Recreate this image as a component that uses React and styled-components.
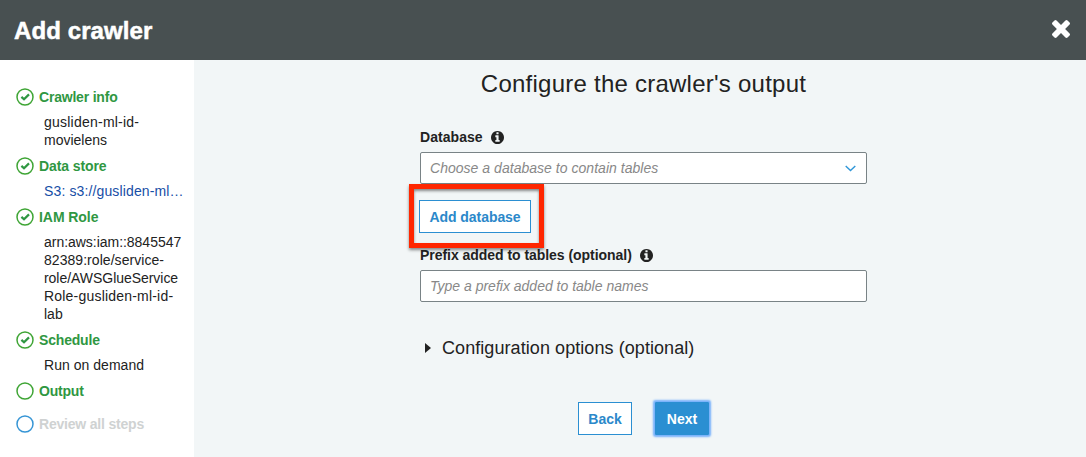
import React from "react";
import styled, { createGlobalStyle } from "styled-components";

const GlobalStyle = createGlobalStyle`
  * { box-sizing: border-box; }
  body {
    margin: 0;
    background: #f2f6f7;
    color: #222;
    font: 14px/18px "Liberation Sans", Arial, sans-serif;
  }
`;

const Page = styled.div`
  display: flex;
  flex-direction: column;
  height: 457px;
  overflow: hidden;
`;

const Header = styled.header`
  display: flex;
  align-items: center;
  justify-content: space-between;
  height: 60px;
  flex: none;
  padding: 0 16px 0 14px;
  background: #485051;
  color: #fff;
`;

const HeaderTitle = styled.h1`
  margin: 0;
  padding-top: 2px;
  font-size: 24px;
  line-height: 28px;
  letter-spacing: 0.1px;
  -webkit-text-stroke: 0.5px #fff;
`;

const CloseButton = styled.button`
  display: flex;
  margin: 0 0 2px;
  padding: 0;
  border: 0;
  background: none;
  color: #fff;
`;

const Body = styled.div`
  display: flex;
  flex: 1;
`;

const Sidebar = styled.nav`
  width: 194px;
  flex: none;
  padding: 27px 10px 0 16px;
  background: #fff;
`;

const StepHead = styled.div`
  display: flex;
  align-items: center;
  gap: 5px;
  height: 20px;
  color: ${(p) => (p.$pending ? "#cfd2d2" : "#2f9742")};
  font-weight: bold;
  letter-spacing: ${(p) => p.$spacing || 0}px;
  white-space: nowrap;

  svg { flex: none; }
`;

const StepDetail = styled.div`
  padding: 6px 0 7px 28px;
  color: ${(p) => (p.$link ? "#174ea6" : "#222")};
  white-space: nowrap;
`;

const DetailLine = styled.div`
  letter-spacing: ${(p) => p.$spacing || 0}px;
`;

const Content = styled.main`
  width: 673px;
  padding: 8px 0 0 226px;
`;

const Title = styled.h2`
  margin: 0 0 29px;
  font-size: 24px;
  font-weight: normal;
  line-height: 32px;
  letter-spacing: 0.24px;
  text-align: center;
  white-space: nowrap;
`;

const Label = styled.label`
  display: flex;
  align-items: center;
  gap: 8px;
  height: 16px;
  margin-bottom: 7px;
  font-weight: bold;
  letter-spacing: ${(p) => p.$spacing || 0}px;
`;

const Field = styled.div`
  display: flex;
  align-items: center;
  justify-content: space-between;
  height: 32px;
  padding: 0 10px 0 9px;
  border: 1px solid #798386;
  border-radius: 2px;
  background: #fff;
  color: #888;
  font-style: italic;
  letter-spacing: ${(p) => p.$spacing || 0}px;
`;

const Button = styled.button`
  width: ${(p) => p.$width}px;
  height: 33px;
  padding: 0;
  border: 1px solid #2b8fd2;
  border-radius: ${(p) => (p.$primary ? 1 : 0)}px;
  background: ${(p) => (p.$primary ? "#2b8fd2" : "#fff")};
  color: ${(p) => (p.$primary ? "#fff" : "#2b88ca")};
  box-shadow: ${(p) => (p.$primary ? "0 0 2px 1.5px #75b0fb" : "none")};
  font: bold 14px/18px "Liberation Sans", Arial, sans-serif;
  letter-spacing: ${(p) => p.$spacing || 0}px;
`;

const AddRow = styled.div`
  position: relative;
  display: flex;
  margin: 16px 0 14px -1px;
`;

const Highlight = styled.div`
  position: absolute;
  left: -10px;
  top: -16px;
  width: 135px;
  height: 64px;
  border: 5px solid #ff2600;
  box-shadow: 0 2px 3px rgba(0, 0, 0, 0.45), inset 0 2px 3px rgba(0, 0, 0, 0.45);
  pointer-events: none;
`;

const Options = styled.div`
  display: flex;
  align-items: center;
  gap: 11px;
  height: 24px;
  margin-top: 34px;
  padding-left: 5px;
  font-size: 18px;
  letter-spacing: 0.07px;
  white-space: nowrap;
`;

const Actions = styled.div`
  display: flex;
  gap: 23px;
  margin-top: 42px;
  padding-left: 158px;
`;

const StepIcon = ({ done, color = "#3fa535" }) => (
  <svg width="18" height="18" viewBox="0 0 18 18" fill="none">
    <circle cx="9" cy="9" r="8" stroke={color} strokeWidth="1.5" />
    {done && <path d="M5.4 8.9 8 11.3 13 6.4" stroke="#2f9742" strokeWidth="2.2" />}
  </svg>
);

const InfoIcon = () => (
  <svg width="13" height="13" viewBox="0 128 1536 1536" fill="#222">
    <path d="M1024 1376v-160q0-14-9-23t-23-9h-96v-512q0-14-9-23t-23-9h-320q-14 0-23 9t-9 23v160q0 14 9 23t23 9h96v320h-96q-14 0-23 9t-9 23v160q0 14 9 23t23 9h448q14 0 23-9t9-23zm-128-896v-160q0-14-9-23t-23-9h-192q-14 0-23 9t-9 23v160q0 14 9 23t23 9h192q14 0 23-9t9-23zm640 416q0 209-103 385.5t-279.5 279.5-385.5 103-385.5-103-279.5-279.5-103-385.5 103-385.5 279.5-279.5 385.5-103 385.5 103 279.5 279.5 103 385.5z" />
  </svg>
);

const CloseIcon = () => (
  <svg width="18" height="18" viewBox="110 366 1188 1188" fill="currentColor">
    <path d="M1298 1322q0 40-28 68l-136 136q-28 28-68 28t-68-28l-294-294-294 294q-28 28-68 28t-68-28l-136-136q-28-28-28-68t28-68l294-294-294-294q-28-28-28-68t28-68l136-136q28-28 68-28t68 28l294 294 294-294q28-28 68-28t68 28l136 136q28 28 28 68t-28 68l-294 294 294 294q28 28 28 68z" />
  </svg>
);

const ChevronIcon = () => (
  <svg width="11" height="7" viewBox="0 0 11 7" fill="none" stroke="#2f96d8" strokeWidth="1.4">
    <path d="M.7 .9 5.5 5.5 10.3 .9" />
  </svg>
);

const CaretIcon = () => (
  <svg width="6" height="10" viewBox="0 0 6 10" fill="#222">
    <path d="M0 0 6 5 0 10Z" />
  </svg>
);

const steps = [
  {
    name: "Crawler info",
    spacing: -0.2,
    done: true,
    lines: [["gusliden-ml-id-", 0.23], ["movielens", 0]],
  },
  {
    name: "Data store",
    spacing: -0.1,
    done: true,
    link: true,
    lines: [["S3: s3://gusliden-ml…", 0.13]],
  },
  {
    name: "IAM Role",
    spacing: -0.06,
    done: true,
    lines: [
      ["arn:aws:iam::8845547", -0.03],
      ["82389:role/service-", 0.05],
      ["role/AWSGlueService", -0.04],
      ["Role-gusliden-ml-id-", 0.2],
      ["lab", 0],
    ],
  },
  { name: "Schedule", spacing: -0.18, done: true, lines: [["Run on demand", 0.03]] },
  { name: "Output", spacing: -0.2, lines: [] },
  { name: "Review all steps", spacing: -0.2, pending: true, lines: [] },
];

export default function App() {
  return (
    <Page>
      <GlobalStyle />
      <Header>
        <HeaderTitle>Add crawler</HeaderTitle>
        <CloseButton aria-label="Close"><CloseIcon /></CloseButton>
      </Header>
      <Body>
        <Sidebar>
          {steps.map((s) => (
            <React.Fragment key={s.name}>
              <StepHead $pending={s.pending} $spacing={s.spacing}>
                <StepIcon done={s.done} color={s.pending ? "#3695d5" : undefined} />
                {s.name}
              </StepHead>
              <StepDetail $link={s.link}>
                {s.lines.map(([text, spacing]) => (
                  <DetailLine key={text} $spacing={spacing}>{text}</DetailLine>
                ))}
              </StepDetail>
            </React.Fragment>
          ))}
        </Sidebar>
        <Content>
          <Title>Configure the crawler's output</Title>
          <Label $spacing={0.05}>Database <InfoIcon /></Label>
          <Field $spacing={0.03}>
            Choose a database to contain tables
            <ChevronIcon />
          </Field>
          <AddRow>
            <Button $width={112} $spacing={-0.05}>Add database</Button>
            <Highlight />
          </AddRow>
          <Label $spacing={-0.04}>Prefix added to tables (optional) <InfoIcon /></Label>
          <Field>Type a prefix added to table names</Field>
          <Options>
            <CaretIcon />
            Configuration options (optional)
          </Options>
          <Actions>
            <Button $width={54}>Back</Button>
            <Button $width={54} $primary>Next</Button>
          </Actions>
        </Content>
      </Body>
    </Page>
  );
}
